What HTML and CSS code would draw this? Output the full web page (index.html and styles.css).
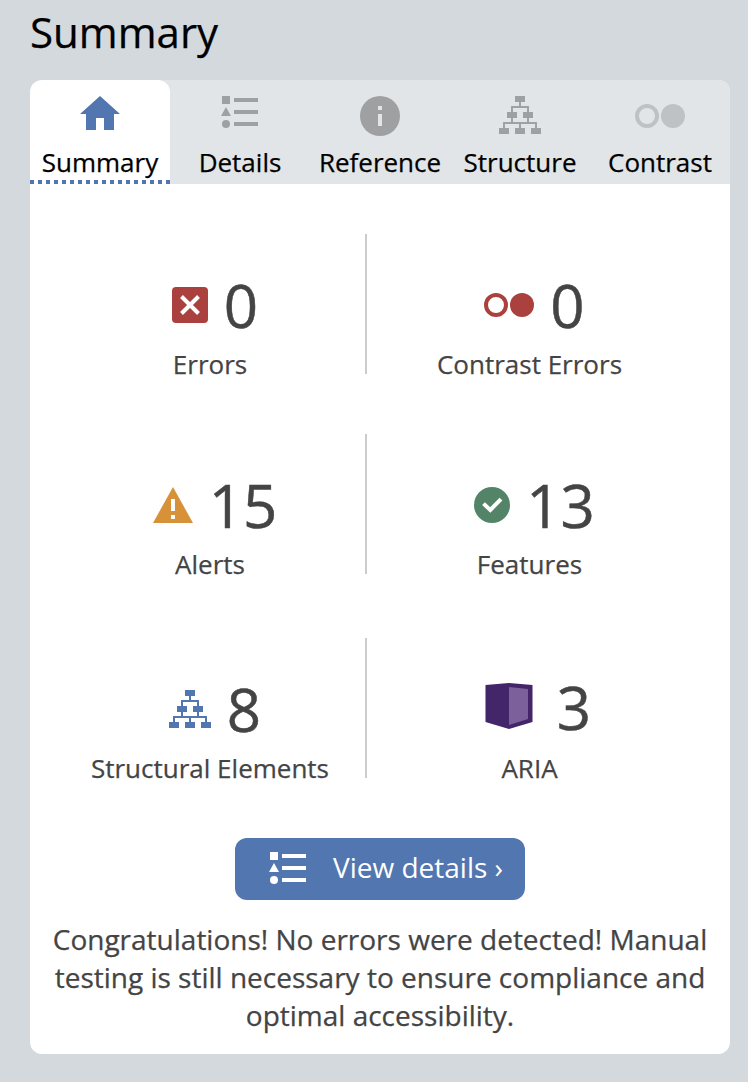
FILE: index.html
```html
<!DOCTYPE html>
<html lang="en">
<head>
<meta charset="utf-8">
<title>Summary</title>
<link rel="stylesheet" href="styles.css">
</head>
<body>
<svg class="defs" width="0" height="0" aria-hidden="true">
  <symbol id="list" viewBox="0 0 38 34">
    <path d="M1 1h8v8H1zM5 12l5 9H0zM13 3h24v4H13zM13 15h24v4H13zM13 27h24v4H13z"/>
    <circle cx="5" cy="29" r="4"/>
  </symbol>
  <symbol id="tree" viewBox="0 0 42 38">
    <path d="M16 0h10v6H16zM8 16h10v6H8zM24 16h10v6H24zM0 32h10v6H0zM16 32h10v6H16zM32 32h10v6H32z"/>
    <path d="M21 6v5M13 16v-5h16v5M13 22v5M29 22v5M5 32v-5h32v5M21 27v5" fill="none" stroke="currentColor" stroke-width="2"/>
  </symbol>
  <symbol id="circles" viewBox="0 0 50 24">
    <circle cx="12" cy="12" r="10" fill="none" stroke="currentColor" stroke-width="4"/>
    <circle cx="38" cy="12" r="12"/>
  </symbol>
</svg>
<h1 class="title">Summary</h1>
<main class="panel">
  <nav class="tabs">
    <a class="tab tab-active">
      <svg class="tab-icon icon-blue" width="40" height="42" viewBox="0 0 40 42"><path d="M20 0L40 18H34V34H24V22H16V34H6V18H0z"/></svg>
      <span>Summary</span>
    </a>
    <a class="tab">
      <svg class="tab-icon icon-list" width="38" height="34"><use href="#list"/></svg>
      <span>Details</span>
    </a>
    <a class="tab">
      <svg class="tab-icon" width="40" height="40" viewBox="0 0 40 40"><circle cx="20" cy="20" r="20"/><path class="cut" d="M18 10h4v4h-4zM18 18h4v12h-4z"/></svg>
      <span>Reference</span>
    </a>
    <a class="tab">
      <svg class="tab-icon" width="42" height="38"><use href="#tree"/></svg>
      <span>Structure</span>
    </a>
    <a class="tab">
      <svg class="tab-icon icon-pale" width="50" height="24"><use href="#circles"/></svg>
      <span>Contrast</span>
    </a>
  </nav>
  <section class="stats">
    <div class="stat">
      <div class="value"><svg class="icon-red" width="36" height="36" viewBox="0 0 36 36"><rect width="36" height="36" rx="4"/><path class="line" d="M9.5 9.5L26.5 26.5M26.5 9.5L9.5 26.5" stroke-width="4"/></svg><span>0</span></div>
      <div class="label">Errors</div>
    </div>
    <div class="stat">
      <div class="value"><svg class="icon-red" width="50" height="24"><use href="#circles"/></svg><span>0</span></div>
      <div class="label">Contrast Errors</div>
    </div>
    <div class="stat">
      <div class="value"><svg class="icon-orange" width="40" height="36" viewBox="0 0 40 36"><path d="M20 0L40 36H0z"/><path class="white" d="M18 12h4v12h-4zM18 28h4v4h-4z"/></svg><span>15</span></div>
      <div class="label">Alerts</div>
    </div>
    <div class="stat">
      <div class="value"><svg class="icon-green" width="36" height="36" viewBox="0 0 36 36"><circle cx="18" cy="18" r="18"/><path class="line" d="M9.5 16.6L16.3 22.9L27 12.1" stroke-width="4"/></svg><span>13</span></div>
      <div class="label">Features</div>
    </div>
    <div class="stat">
      <div class="value"><svg class="icon-blue" width="42" height="38"><use href="#tree"/></svg><span>8</span></div>
      <div class="label">Structural Elements</div>
    </div>
    <div class="stat">
      <div class="value value-aria"><svg class="icon-purple" width="62" height="48" viewBox="0 0 62 48"><path d="M7.5 2L31 0L54.5 2V39L31 46L7.5 39z"/><path class="face" d="M31 4L50 6V36L31 42z"/></svg><span>3</span></div>
      <div class="label">ARIA</div>
    </div>
  </section>
  <button class="details"><svg width="38" height="34"><use href="#list"/></svg><span>View details ›</span></button>
  <p class="message">Congratulations! No errors were detected! Manual testing is still necessary to ensure compliance and optimal accessibility.</p>
</main>
</body>
</html>
```
FILE: styles.css
```css
* { box-sizing: border-box; }
body {
  margin: 0;
  height: 1082px;
  padding: 0 18px 0 30px;
  background: #d4d9dd;
  color: #444;
  font-family: "Open Sans", "Noto Sans", sans-serif;
  -webkit-text-stroke: 0.25px currentColor;
}
.defs { position: absolute; }
svg { display: block; flex: none; fill: currentColor; }
.title {
  margin: 0;
  height: 80px;
  padding-top: 3px;
  color: #000;
  font-size: 42px;
  font-weight: 400;
  line-height: 58px;
}
.panel {
  height: 974px;
  background: #fff;
  border-radius: 12px;
  overflow: hidden;
}
.tabs {
  display: grid;
  grid-template-columns: repeat(5, 140px);
  height: 104px;
  background: #e1e5e8;
}
.tab {
  display: flex;
  flex-direction: column;
  justify-content: space-between;
  align-items: center;
  padding-top: 16px;
  color: #000;
  font-size: 26px;
  line-height: 36px;
  white-space: nowrap;
}
.tab span { margin-bottom: 4px; }
.tab-icon { color: #9fa0a2; }
.tab .icon-list { margin-top: -1px; }
.tab .icon-blue { color: #5276b0; }
.tab .icon-pale { margin-top: 8px; color: #bdc2c5; }
.tab-active {
  background: repeating-linear-gradient(90deg, #5276b0 0 4px, #fff 4px 8px) 0 100% / 100% 4px no-repeat #fff;
  border-radius: 12px 12px 0 0;
}
.cut { fill: #e1e5e8; }
.white { fill: #fff; }
.line { fill: none; stroke: #fff; }
.face { fill: #7c609b; }
.icon-red { color: #ab413e; }
.icon-orange { color: #d69139; }
.icon-green { color: #548468; }
.icon-blue { color: #5276b0; }
.icon-purple { color: #432569; }
.stats {
  display: grid;
  grid-template-columns: 312px 325px;
  grid-template-rows: 140px 140px 144px;
  row-gap: 60px;
  padding: 50px 0 0 25px;
}
.stat { padding-top: 30px; }
.stat:nth-child(odd) { border-right: 2px solid #ccc; }
.stat:nth-child(n+5) { margin-top: 4px; }
.value {
  display: flex;
  justify-content: center;
  align-items: center;
  gap: 16px;
  height: 82px;
  padding-left: 10px;
  font-size: 60px;
  line-height: 82px;
  -webkit-text-stroke-width: 0.5px;
}
.value-aria { gap: 17px; margin-top: -2px; margin-bottom: 2px; }
.label { font-size: 26px; line-height: 36px; text-align: center; }
.details {
  display: flex;
  align-items: center;
  width: 290px;
  height: 62px;
  margin: 60px auto 0;
  padding: 0 0 2px 34px;
  gap: 26px;
  border: 0;
  border-radius: 12px;
  background: #5276b0;
  color: #fff;
  font: 28px/38px "Open Sans", "Noto Sans", sans-serif;
  white-space: nowrap;
  -webkit-text-stroke-width: 0;
}
.details span { margin-top: -2px; }
.message {
  margin: 20px 20px 0;
  font-size: 28px;
  line-height: 38px;
  text-align: center;
}
```
